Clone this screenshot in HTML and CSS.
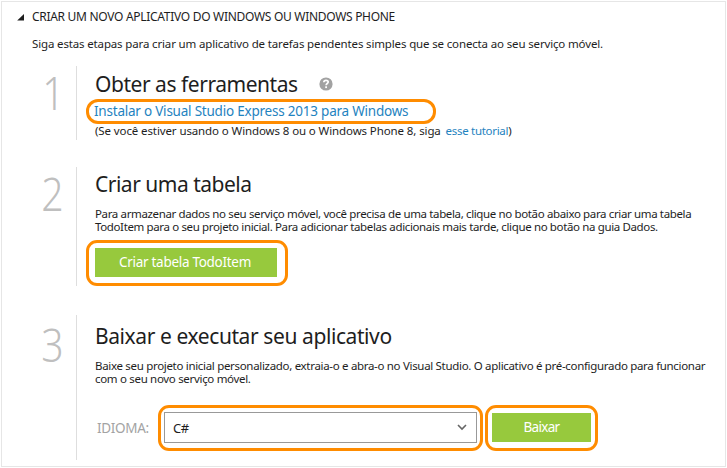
FILE: index.html
```
<!DOCTYPE html>
<html lang="pt-BR">
<head>
<meta charset="utf-8">
<title>Novo aplicativo</title>
<link rel="stylesheet" href="styles.css">
</head>
<body>
<main class="panel">
  <header class="panel-head">
    <svg class="caret" viewBox="0 0 8 7" width="8" height="7"><path d="M7 0v6.600H.2z"/></svg>
    <h1 class="panel-title">CRIAR UM NOVO APLICATIVO DO WINDOWS OU WINDOWS PHONE</h1>
  </header>
  <p class="intro">Siga estas etapas para criar um aplicativo de tarefas pendentes simples que se conecta ao seu serviço móvel.</p>

  <section class="step step-tools">
    <div class="num num-one"><span>1</span></div>
    <div class="body">
      <div class="title-row">
        <h2 class="title title-tools">Obter as ferramentas</h2>
        <svg class="help" viewBox="0 0 14 14" width="14" height="14"><circle cx="7" cy="7" r="6.600" fill="#a2a2a2"/><path d="M4.800 5.300C4.900 3.900 5.800 3.300 7 3.300c1.300 0 2.200.7 2.200 1.800C9.200 6.500 7.100 6.600 7.100 8.300" fill="none" stroke="#fff" stroke-width="1.700"/><rect x="6.200" y="9.300" width="1.800" height="1.800" fill="#fff"/></svg>
      </div>
      <div class="install"><a class="link">Instalar o Visual Studio Express 2013 para Windows</a></div>
      <p class="note">(Se você estiver usando o Windows 8 ou o Windows Phone 8, siga <a class="link">esse tutorial</a>)</p>
    </div>
  </section>

  <section class="step step-table">
    <div class="num"><span>2</span></div>
    <div class="body">
      <h2 class="title">Criar uma tabela</h2>
      <p class="text text-table">Para armazenar dados no seu serviço móvel, você precisa de uma tabela, clique no botão abaixo para criar uma tabela<br>TodoItem para o seu projeto inicial. Para adicionar tabelas adicionais mais tarde, clique no botão na guia Dados.</p>
      <div class="ring ring-create"><button class="btn btn-create">Criar tabela TodoItem</button></div>
    </div>
  </section>

  <section class="step step-run">
    <div class="num"><span>3</span></div>
    <div class="body">
      <h2 class="title title-run">Baixar e executar seu aplicativo</h2>
      <p class="text text-run">Baixe seu projeto inicial personalizado, extraia-o e abra-o no Visual Studio. O aplicativo é pré-configurado para funcionar<br>com o seu novo serviço móvel.</p>
      <div class="form">
        <span class="label">IDIOMA:</span>
        <div class="ring ring-select">
          <div class="select"><span>C#</span><svg viewBox="0 0 10 7" width="10" height="7"><path d="M1 1l4 4 4-4" fill="none" stroke="#666" stroke-width="1.600"/></svg></div>
        </div>
        <div class="ring ring-download"><button class="btn btn-download">Baixar</button></div>
      </div>
    </div>
  </section>
</main>
</body>
</html>
```
FILE: styles.css
```
* { box-sizing: border-box; }
body {
  margin: 0;
  background: #fff;
  color: #1e1e1e;
  font-family: "Noto Sans", "Open Sans", sans-serif;
}
h1, h2, p { margin: 0; font-weight: 400; white-space: nowrap; }
svg { display: block; flex: none; }

.panel {
  width: 725px;
  height: 466px;
  margin: 1px;
  padding-top: 7px;
  border: 1px solid #e6e6e6;
  overflow: hidden;
}
.panel-head { display: flex; align-items: center; gap: 7px; height: 16px; padding-left: 15px; }
.caret { fill: #1e1e1e; }
.panel-title { font-size: 12px; line-height: 16px; letter-spacing: -0.296px; }
.intro { margin: 11px 0 14px 30px; font-size: 11.5px; line-height: 16px; letter-spacing: -0.149px; }

.step { display: grid; grid-template-columns: 74px 1fr; }
.num {
  padding-left: 39px;
  color: #bfbfbf;
  font-size: 45px;
  font-weight: 300;
  line-height: 45px;
}
.num span { display: inline-block; transform: scaleX(0.87); transform-origin: 10% 50%; }
.num-one { padding-left: 40px; }
.body { border-left: 1px solid #dedede; padding-left: 18px; }
.step-tools { height: 74px; margin-bottom: 27px; }
.step-tools .num { padding-top: 4px; }
.step-tools .body { padding-top: 4px; }
.step-table { height: 118px; margin-bottom: 30px; }
.step-table .num { padding-top: 4px; }
.step-table .body { padding-top: 3px; }
.step-run { height: 145px; }
.step-run .num { padding-top: 7px; }
.step-run .body { padding-top: 7px; }

.title { font-size: 21px; line-height: 28px; letter-spacing: -0.5px; }
.title-tools { letter-spacing: -0.46px; }
.title-run { letter-spacing: -0.41px; }
.title-row { display: flex; align-items: center; gap: 21px; height: 28px; }
.title-row .title { line-height: 30px; }
.install {
  width: 350px;
  height: 25px;
  margin: 1px 0 0 -9px;
  padding-left: 5px;
  border: 3px solid #ff8c00;
  border-radius: 12px;
  font-size: 13.5px;
  line-height: 19px;
  letter-spacing: -0.22px;
  white-space: nowrap;
}
.link { color: #1f83c0; }
.note { font-size: 11.5px; line-height: 16px; letter-spacing: -0.108px; margin-top: -1px; }
.note .link { letter-spacing: -0.3px; margin-left: 2px; }
.text { font-size: 11.5px; line-height: 13px; }
.text-table { margin-top: 9px; letter-spacing: -0.364px; }
.text-run { margin-top: 9px; letter-spacing: -0.315px; }

.ring { border: 3px solid #ff8c00; border-radius: 11px; height: 46px; }
.ring-create { width: 202px; margin: 7px 0 0 -9px; padding: 5px 6px; }
.btn {
  display: block;
  height: 29px;
  padding: 0;
  border: 0;
  background: #97c93d;
  color: #fff;
  font-family: inherit;
  font-size: 13.5px;
  line-height: 29px;
  letter-spacing: -0.29px;
}
.btn-create { width: 182px; padding-right: 2px; }
.form { display: flex; margin-top: 20px; }
.label { width: 63px; padding-left: 2px; color: #a3a3a3; font-size: 13.5px; line-height: 46px; letter-spacing: -0.3px; }
.ring-select { width: 325px; padding: 4px 3px; }
.select {
  display: flex;
  align-items: center;
  justify-content: space-between;
  height: 31px;
  padding: 0 9px 0 8px;
  border: 1px solid #999;
  font-size: 13px;
  letter-spacing: -0.5px;
}
.ring-download { width: 113px; margin-left: 2px; padding: 5px 4px; }
.btn-download { width: 99px; letter-spacing: -0.7px; }
```
